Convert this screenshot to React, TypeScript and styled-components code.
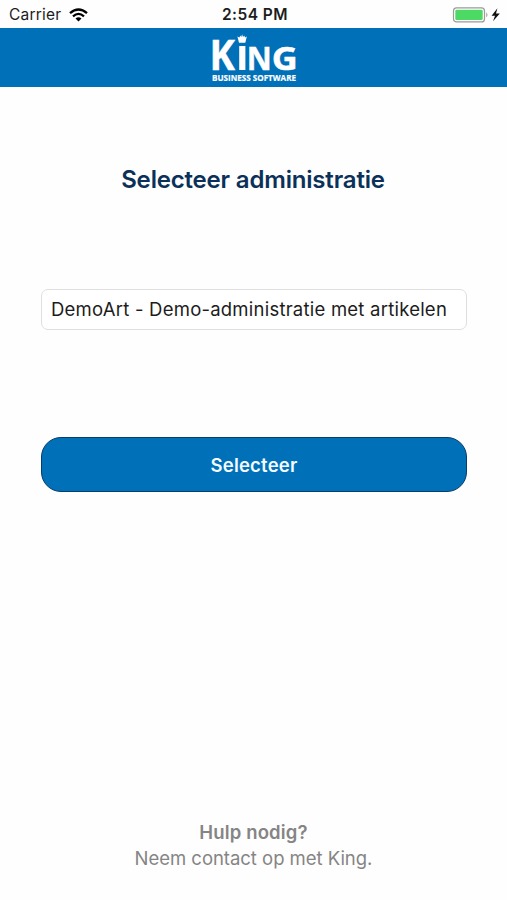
import React from 'react';
import styled, { createGlobalStyle } from 'styled-components';

const GlobalStyle = createGlobalStyle`
  * { box-sizing: border-box; }
  body { margin: 0; background: #fefefe; font-family: Inter, "Liberation Sans", sans-serif; }
`;

const Screen = styled.main`
  width: 507px;
  height: 900px;
  display: flex;
  flex-direction: column;
  background: #fefefe;
  overflow: hidden;
`;

const StatusBar = styled.div`
  height: 28px;
  flex: none;
  display: grid;
  grid-template-columns: 1fr auto 1fr;
  align-items: center;
  padding: 2px 6px 0 9px;
  color: #1c1c1c;
`;

const Carrier = styled.div`
  display: flex;
  align-items: center;
  gap: 8px;
  font-size: 15.5px;
  line-height: 20px;
  letter-spacing: 0.2px;
`;

const Clock = styled.time`
  font-size: 15.5px;
  line-height: 20px;
  font-weight: 600;
  letter-spacing: 0.45px;
`;

const Power = styled.div`
  display: flex;
  justify-content: flex-end;
`;

const Header = styled.header`
  height: 59px;
  flex: none;
  display: flex;
  justify-content: center;
  background: #0070b8;
`;

const Content = styled.section`
  flex: 1;
  display: flex;
  flex-direction: column;
  padding: 77px 40px 0 41px;
`;

const Title = styled.h1`
  margin: 0;
  padding-right: 2px;
  height: 32px;
  line-height: 32px;
  text-align: center;
  font-size: 24px;
  font-weight: 600;
  letter-spacing: -0.18px;
  color: #0b3159;
`;

const Field = styled.button`
  height: 41px;
  margin-top: 93px;
  padding: 0 10px 1px 9px;
  border: 1px solid #dfdfdf;
  border-radius: 7px;
  background: #fff;
  text-align: left;
  white-space: nowrap;
  font: 400 18.5px/24px Inter, sans-serif;
  letter-spacing: 0.23px;
  color: #1c1c1c;
`;

const Submit = styled.button`
  height: 55px;
  margin-top: 107px;
  padding: 0;
  border: 1px solid #073d6b;
  border-radius: 20px;
  background: #0070b8;
  color: #f4faff;
  font: 600 18.5px/24px Inter, sans-serif;
  letter-spacing: 0.2px;
`;

const Help = styled.footer`
  padding-bottom: 29px;
  text-align: center;
  font-size: 18.5px;
  line-height: 26px;
  color: #858585;
`;

const HelpTitle = styled.div`
  font-weight: 600;
  letter-spacing: 0.15px;
`;

const Contact = styled.div`
  letter-spacing: -0.03px;
`;

const Logo = styled.svg`
  overflow: visible;
  font-family: "Open Sans", sans-serif;
  font-weight: 700;
`;

const WifiIcon = () => (
  <svg width="19" height="14" viewBox="0 0 19 14" fill="none" stroke="#000" strokeWidth="2.3">
    <path d="M1 5.1Q9.5-2.1 18 5.1" />
    <path d="M4 8.3Q9.5 3.5 15 8.3" />
    <path d="M6.5 10.5Q9.5 8 12.5 10.5L9.5 13.5Z" fill="#000" stroke="none" />
  </svg>
);

const BatteryIcon = () => (
  <svg width="49" height="16" viewBox="0 0 49 16">
    <rect x="1.5" y="0.9" width="31" height="14" rx="3" fill="#fff" stroke="#9b9b9b" strokeWidth="1.2" />
    <rect x="3.3" y="2.7" width="27.4" height="10.4" rx="1.4" fill="#4cd964" />
    <path d="M34.3 5.2Q36.6 7.9 34.3 10.6Z" fill="#999" />
    <path d="M45.4 1.2L39.6 8.8H43L41 14.3L47.8 6.4H44Z" fill="#111" />
  </svg>
);

const KingLogo = () => (
  <Logo width="88" height="59" viewBox="0 0 88 59" fill="#fff">
    <g stroke="#fff" strokeWidth="0.5">
      <text x="-0.6" y="42" fontSize="42" textLength="25.4" lengthAdjust="spacingAndGlyphs">K</text>
      <text x="36.8" y="42" fontSize="33" textLength="25" lengthAdjust="spacingAndGlyphs">N</text>
      <text x="61.8" y="42" fontSize="33" textLength="26" lengthAdjust="spacingAndGlyphs">G</text>
    </g>
    <text x="2" y="53.3" fontSize="8.5" textLength="84" lengthAdjust="spacingAndGlyphs" stroke="#fff" strokeWidth="0.2">BUSINESS SOFTWARE</text>
    <path d="M29.2 18H35.4V42H29.2Z" />
    <path d="M27.4 8.5L29.5 9.5L30.2 7.5L31.3 9L32.1 6.2L33 9L34.3 7.5L35 9.5L36.8 8.5L35.3 14.8H29Z" />
  </Logo>
);

export default function App() {
  return (
    <Screen>
      <GlobalStyle />
      <StatusBar>
        <Carrier>Carrier <WifiIcon /></Carrier>
        <Clock>2:54 PM</Clock>
        <Power><BatteryIcon /></Power>
      </StatusBar>
      <Header><KingLogo /></Header>
      <Content>
        <Title>Selecteer administratie</Title>
        <Field type="button">DemoArt - Demo-administratie met artikelen</Field>
        <Submit type="button">Selecteer</Submit>
      </Content>
      <Help>
        <HelpTitle>Hulp nodig?</HelpTitle>
        <Contact>Neem contact op met King.</Contact>
      </Help>
    </Screen>
  );
}
